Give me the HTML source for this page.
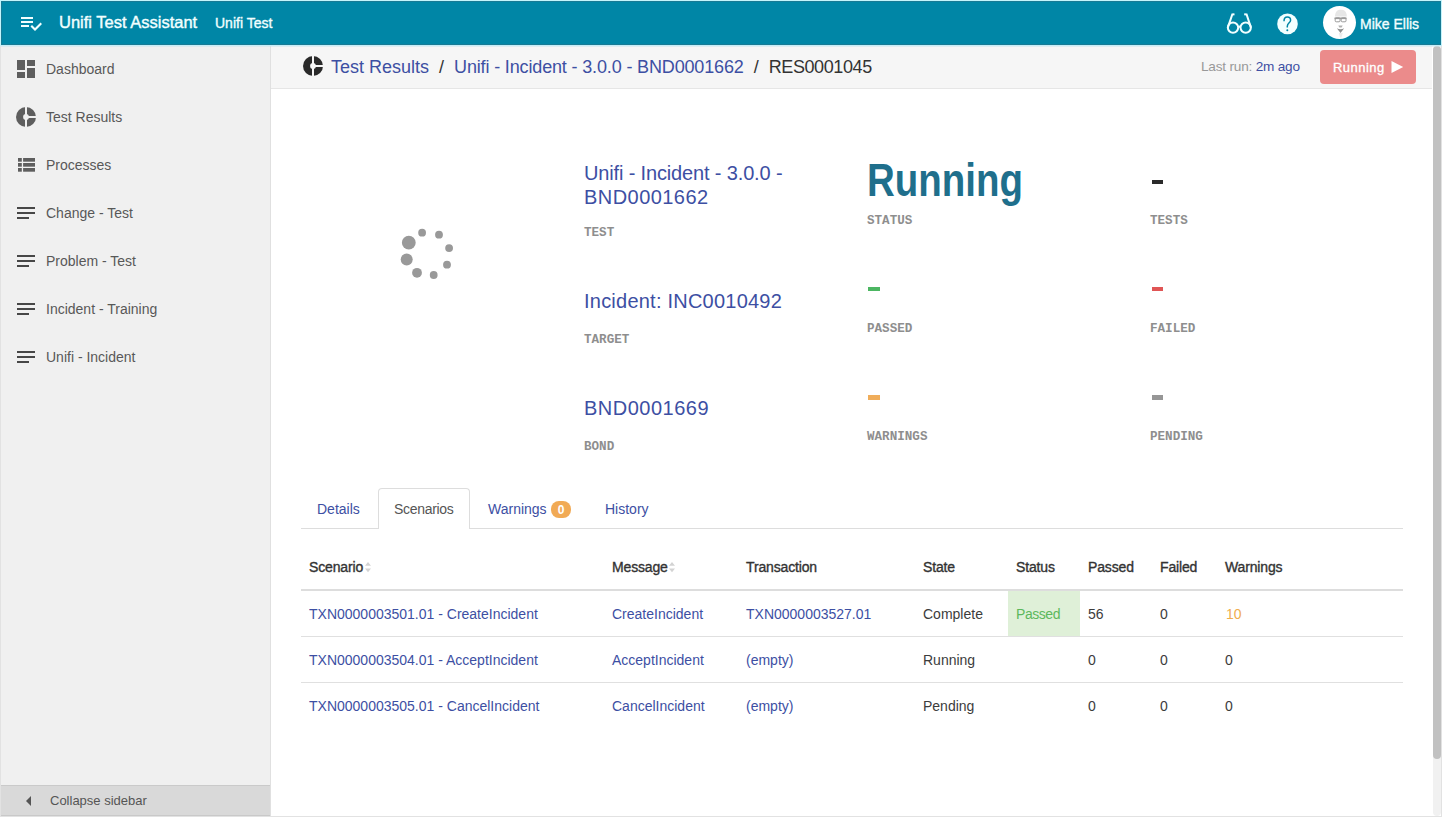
<!DOCTYPE html>
<html><head><meta charset="utf-8">
<style>
*{box-sizing:border-box;margin:0;padding:0}
html,body{width:1442px;height:817px;overflow:hidden;background:#fff;font-family:"Liberation Sans",sans-serif}
.abs{position:absolute}
#frame{position:absolute;left:0;top:0;width:1442px;height:817px;border:1px solid #e2e2e2;border-top-color:#c4f4fb}
#fl{position:absolute;left:0;top:0;width:1px;height:46px;background:#c4f4fb}
#fr{position:absolute;left:1441px;top:0;width:1px;height:46px;background:#c4f4fb}
#hdr{position:absolute;left:1px;top:1px;width:1440px;height:44px;background:#0086a6;color:#f2ffff;box-shadow:inset 0 0 0 1px #187a94, inset 0 -1px 0 #17687d}
#hdrline{position:absolute;left:0px;top:45px;width:1442px;height:1px;background:#c4eef8}
#hdrline2{position:absolute;z-index:5;left:1px;top:46px;width:1440px;height:1px;background:rgba(200,225,235,0.5)}
#side{position:absolute;left:1px;top:46px;width:270px;height:770px;background:#f0f0f0;border-right:1px solid #e0e0e0}
.nav{position:absolute;left:45px;font-size:14px;color:#585858;white-space:nowrap}
#collapse{position:absolute;left:1px;top:785px;width:269px;height:31px;background:#d9d9d9;border-bottom:1px solid #c9c9c9;border-top:1px solid #cacaca}
#crumb{position:absolute;left:271px;top:46px;width:1161px;height:43px;background:#f6f6f6;border-bottom:1px solid #e6e6e6}
.link{color:#3d4fa3}
.lbl{position:absolute;font-family:"Liberation Mono",monospace;font-weight:bold;font-size:12.6px;color:#8e8e8e;white-space:nowrap}
.big{position:absolute;font-size:20px;line-height:24px;color:#3d4fa3;white-space:nowrap}
.tab{position:absolute;font-size:14px;white-space:nowrap}
.th{position:absolute;font-size:14px;-webkit-text-stroke:0.35px #333;color:#333;letter-spacing:-0.15px;white-space:nowrap}
.td{position:absolute;font-size:14px;color:#3c3c3c;white-space:nowrap}
.td.link{color:#3d4fa3}
.hl{position:absolute;left:301px;width:1102px;height:1px;background:#e0e0e0}
#scroll{position:absolute;left:1433px;top:46px;width:8px;height:770px;background:#f1f1f1;border-radius:4px}
#thumb{position:absolute;left:1433px;top:46px;width:8px;height:713px;background:#c1c1c1;border-radius:4px}
</style></head><body>
<div id="frame"></div><div id="fl"></div><div id="fr"></div>
<div id="hdr">
  <svg class="abs" style="left:17.7px;top:10px" width="24" height="24" viewBox="0 0 24 24"><path fill="#f2ffff" d="M14 10H2v2h12v-2zm0-4H2v2h12V6zM2 16h8v-2H2v2zm19.5-4.5L23 13l-6.99 7-4.51-4.5L13 14l3.01 3 5.49-5.5z"/></svg>
  <div class="abs" style="left:58px;top:12px;font-size:16.5px;-webkit-text-stroke:0.4px #f2ffff;white-space:nowrap">Unifi Test Assistant</div>
  <div class="abs" style="left:214px;top:14px;font-size:14px;-webkit-text-stroke:0.35px #f2ffff;white-space:nowrap">Unifi Test</div>
  <svg class="abs" style="left:1223px;top:10px" width="32" height="24" viewBox="0 0 32 24">
    <g fill="none" stroke="#f2ffff" stroke-width="2">
      <circle cx="9" cy="16.6" r="5.2"/><circle cx="21.7" cy="16.6" r="5.2"/>
      <path d="M14.2 16.2 Q15.3 15 16.5 16.2"/>
      <path d="M3.8 16.6 L8.3 3.5 L10.5 3.2"/><path d="M26.9 16.6 L22.6 3.5 L20.2 3.2"/>
    </g>
  </svg>
  <svg class="abs" style="left:1275px;top:11px" width="24" height="24" viewBox="0 0 24 24"><circle cx="11.5" cy="11.9" r="10.3" fill="#f2ffff"/><path d="M8 9.3 C8 6.6 9.6 5.1 11.3 5.1 C13.2 5.1 14.6 6.5 14.6 8.3 C14.6 10.6 11.3 11.2 11.3 14.2 V15.4" fill="none" stroke="#0086a6" stroke-width="1.5"/><circle cx="11.3" cy="18.2" r="1" fill="#0086a6"/></svg>
  <div class="abs" style="left:1321.5px;top:4.5px;width:33px;height:33px;border-radius:50%;background:#fff;overflow:hidden">
    <svg width="33" height="33" viewBox="0 0 33 33">
      <path d="M12 10.5 C12 5.5 14.5 3.7 17.9 3.7 C21.3 3.7 23.8 5.5 23.8 10.5z" fill="#e6e6e6"/>
      <rect x="11.5" y="11.5" width="12" height="1.6" fill="#9a9a9a"/>
      <rect x="12.2" y="11.8" width="4.8" height="4" rx="1" fill="none" stroke="#9a9a9a" stroke-width="1"/>
      <rect x="18.2" y="11.8" width="4.8" height="4" rx="1" fill="none" stroke="#9a9a9a" stroke-width="1"/>
      <path d="M15.3 19.6 H19.7 L18.6 21.6 H16.4z" fill="#b0b0b0"/>
      <path d="M13.8 22.2 Q17.5 24.5 21.2 22.2 L17.5 27z" fill="#8f8f8f"/>
      <path d="M15.8 27 H19.8 L18.5 31.5 H17z" fill="#ececec"/>
    </svg>
  </div>
  <div class="abs" style="left:1359px;top:15px;font-size:14px;-webkit-text-stroke:0.35px #f2ffff;white-space:nowrap">Mike Ellis</div>
</div>
<div id="hdrline"></div><div id="hdrline2"></div>

<div id="side">
  <svg class="abs" style="left:13px;top:11px" width="24" height="24" viewBox="0 0 24 24"><path fill="#5e5e5e" d="M3 13h8V3H3v10zm0 8h8v-6H3v6zm10 0h8V11h-8v10zm0-18v6h8V3h-8z"/></svg>
  <svg class="abs" style="left:14px;top:60px" width="22" height="22" viewBox="0 0 22 22"><g><circle cx="11" cy="11" r="10" fill="#5e5e5e"/><path d="M11 0V22M11 11H22" stroke="#f0f0f0" stroke-width="2"/><circle cx="11" cy="11" r="2.9" fill="#f0f0f0"/></g></svg>
  <svg class="abs" style="left:16px;top:111px" width="18" height="15" viewBox="0 0 18 15"><g fill="#5e5e5e"><rect x="1" y="1" width="3.8" height="3.7"/><rect x="1" y="6" width="3.8" height="3.7"/><rect x="1" y="11" width="3.8" height="3.7"/><rect x="6.1" y="1" width="11.9" height="3.7"/><rect x="6.1" y="6" width="11.9" height="3.7"/><rect x="6.1" y="11" width="11.9" height="3.7"/></g></svg>
  <div class="nav" style="top:15px">Dashboard</div>
  <div class="nav" style="top:63px">Test Results</div>
  <div class="nav" style="top:111px">Processes</div>
  <div class="nav" style="top:159px">Change - Test</div>
  <div class="nav" style="top:207px">Problem - Test</div>
  <div class="nav" style="top:255px">Incident - Training</div>
  <div class="nav" style="top:303px">Unifi - Incident</div>
</div>
<svg class="abs" style="left:16px;top:206px" width="20" height="160" viewBox="0 0 20 160">
  <g fill="#474747">
    <rect x="1" y="1" width="18" height="2"/><rect x="1" y="6" width="18" height="2"/><rect x="1" y="11" width="12" height="2"/>
    <rect x="1" y="49" width="18" height="2"/><rect x="1" y="54" width="18" height="2"/><rect x="1" y="59" width="12" height="2"/>
    <rect x="1" y="97" width="18" height="2"/><rect x="1" y="102" width="18" height="2"/><rect x="1" y="107" width="12" height="2"/>
    <rect x="1" y="145" width="18" height="2"/><rect x="1" y="150" width="18" height="2"/><rect x="1" y="155" width="12" height="2"/>
  </g>
</svg>
<div id="collapse">
  <svg class="abs" style="left:24px;top:9px" width="8" height="12" viewBox="0 0 8 12"><path d="M6 1 L1 6 L6 11z" fill="#555"/></svg>
  <div class="abs" style="left:49px;top:7px;font-size:13px;color:#555;white-space:nowrap">Collapse sidebar</div>
</div>

<div id="crumb">
  <svg class="abs" style="left:31px;top:9px" width="22" height="22" viewBox="0 0 22 22"><g><circle cx="11" cy="11" r="10" fill="#2a2a2a"/><path d="M11 0V22M11 11H22" stroke="#f6f6f6" stroke-width="2"/><circle cx="11" cy="11" r="2.9" fill="#f6f6f6"/></g></svg>
  <div class="abs" style="left:60px;top:11px;font-size:18px;white-space:nowrap;color:#333"><span class="link">Test Results</span>&nbsp;&nbsp;/&nbsp;&nbsp;<span class="link" style="letter-spacing:-0.15px">Unifi - Incident - 3.0.0 - BND0001662</span>&nbsp;&nbsp;/&nbsp;&nbsp;<span style="letter-spacing:-0.4px">RES0001045</span></div>
  <div class="abs" style="left:930px;top:13px;font-size:13.6px;letter-spacing:-0.2px;color:#999;white-space:nowrap">Last run: <span class="link">2m ago</span></div>
  <div class="abs" style="left:1049px;top:4px;width:96px;height:34px;background:#eb8b8b;border-radius:4px"></div>
  <div class="abs" style="left:1062px;top:14px;font-size:13px;-webkit-text-stroke:0.3px #fff;color:#fff;white-space:nowrap;letter-spacing:0.45px">Running</div>
  <svg class="abs" style="left:1120px;top:15px" width="13" height="13" viewBox="0 0 13 13"><path d="M0.5 0 L12.2 6 L0.5 12z" fill="#fff"/></svg>
</div>
<div id="scroll"></div><div id="thumb"></div>

<!-- spinner -->
<svg class="abs" style="left:390px;top:220px" width="70" height="70" viewBox="390 220 70 70">
  <g fill="#999">
    <circle cx="408.8" cy="242.7" r="6.9"/><circle cx="406.7" cy="259.4" r="6"/><circle cx="417" cy="272.8" r="4.9"/>
    <circle cx="433.7" cy="275" r="3.9"/><circle cx="447" cy="264.7" r="3.9"/><circle cx="449.1" cy="248.1" r="3.9"/>
    <circle cx="439" cy="234.7" r="3.9"/><circle cx="422.1" cy="232.7" r="3.9"/>
  </g>
</svg>

<div class="big" style="left:584px;top:161px"><span style="letter-spacing:-0.15px">Unifi - Incident - 3.0.0 -</span><br><span style="letter-spacing:0.45px">BND0001662</span></div>
<div class="lbl" style="left:584px;top:226px">TEST</div>
<div class="big" style="left:584px;top:289px;letter-spacing:0.23px">Incident: INC0010492</div>
<div class="lbl" style="left:584px;top:333px">TARGET</div>
<div class="big" style="left:584px;top:396px;letter-spacing:0.5px">BND0001669</div>
<div class="lbl" style="left:584px;top:440px">BOND</div>

<div class="abs" style="left:867px;top:154.5px;font-size:45.8px;font-weight:bold;color:#1f6f8c;white-space:nowrap;transform:scaleX(0.84);transform-origin:0 0">Running</div>
<div class="lbl" style="left:867px;top:214px">STATUS</div>
<div class="abs" style="left:1152px;top:180px;width:11px;height:4px;background:#2a2a2a"></div>
<div class="lbl" style="left:1150px;top:214px">TESTS</div>
<div class="abs" style="left:868px;top:287px;width:12px;height:4px;background:#4cb662"></div>
<div class="lbl" style="left:867px;top:322px">PASSED</div>
<div class="abs" style="left:1152px;top:287px;width:11px;height:4px;background:#e05555"></div>
<div class="lbl" style="left:1150px;top:322px">FAILED</div>
<div class="abs" style="left:868px;top:395px;width:12px;height:5px;background:#f0ad5a"></div>
<div class="lbl" style="left:867px;top:430px">WARNINGS</div>
<div class="abs" style="left:1152px;top:395px;width:11px;height:5px;background:#969696"></div>
<div class="lbl" style="left:1150px;top:430px">PENDING</div>

<!-- tabs -->
<div class="hl" style="top:528px;background:#ddd"></div>
<div class="abs" style="left:378px;top:488px;width:92px;height:41px;background:#fff;border:1px solid #ddd;border-bottom:none;border-radius:4px 4px 0 0"></div>
<div class="tab link" style="left:317px;top:501px">Details</div>
<div class="tab" style="left:394px;top:501px;color:#555;letter-spacing:-0.3px">Scenarios</div>
<div class="tab link" style="left:488px;top:501px">Warnings</div>
<div class="abs" style="left:551px;top:501px;width:20px;height:17px;border-radius:8px;background:#f1aa55;color:#fff;font-size:12px;font-weight:bold;text-align:center;line-height:18px">0</div>
<div class="tab link" style="left:605px;top:501px">History</div>

<!-- table -->
<div class="th" style="left:309px;top:559px">Scenario</div>
<div class="th" style="left:612px;top:559px">Message</div>
<div class="th" style="left:746px;top:559px">Transaction</div>
<div class="th" style="left:923px;top:559px">State</div>
<div class="th" style="left:1016px;top:559px">Status</div>
<div class="th" style="left:1088px;top:559px">Passed</div>
<div class="th" style="left:1160px;top:559px">Failed</div>
<div class="th" style="left:1225px;top:559px">Warnings</div>
<svg class="abs" style="left:364px;top:561px" width="8" height="12" viewBox="0 0 8 12"><path d="M1 4.8 L4 1 L7 4.8z M1 7.5 L4 11.2 L7 7.5z" fill="#d3d3d3"/></svg>
<svg class="abs" style="left:668px;top:561px" width="8" height="12" viewBox="0 0 8 12"><path d="M1 4.8 L4 1 L7 4.8z M1 7.5 L4 11.2 L7 7.5z" fill="#d3d3d3"/></svg>
<div class="hl" style="top:589px;height:2px;background:#ddd"></div>
<div class="abs" style="left:1008px;top:591px;width:72px;height:45px;background:#dff0d8"></div>
<div class="hl" style="top:636px"></div>
<div class="hl" style="top:682px"></div>

<div class="td link" style="left:309px;top:606px">TXN0000003501.01 - CreateIncident</div>
<div class="td link" style="left:612px;top:606px">CreateIncident</div>
<div class="td link" style="left:746px;top:606px">TXN0000003527.01</div>
<div class="td" style="left:923px;top:606px">Complete</div>
<div class="td" style="left:1016px;top:606px;color:#5cb85c;letter-spacing:-0.45px">Passed</div>
<div class="td" style="left:1088px;top:606px">56</div>
<div class="td" style="left:1160px;top:606px">0</div>
<div class="td" style="left:1226px;top:606px;color:#f0ad4e">10</div>

<div class="td link" style="left:309px;top:652px">TXN0000003504.01 - AcceptIncident</div>
<div class="td link" style="left:612px;top:652px">AcceptIncident</div>
<div class="td link" style="left:746px;top:652px">(empty)</div>
<div class="td" style="left:923px;top:652px">Running</div>
<div class="td" style="left:1088px;top:652px">0</div>
<div class="td" style="left:1160px;top:652px">0</div>
<div class="td" style="left:1225px;top:652px">0</div>

<div class="td link" style="left:309px;top:698px">TXN0000003505.01 - CancelIncident</div>
<div class="td link" style="left:612px;top:698px">CancelIncident</div>
<div class="td link" style="left:746px;top:698px">(empty)</div>
<div class="td" style="left:923px;top:698px">Pending</div>
<div class="td" style="left:1088px;top:698px">0</div>
<div class="td" style="left:1160px;top:698px">0</div>
<div class="td" style="left:1225px;top:698px">0</div>
</body></html>
